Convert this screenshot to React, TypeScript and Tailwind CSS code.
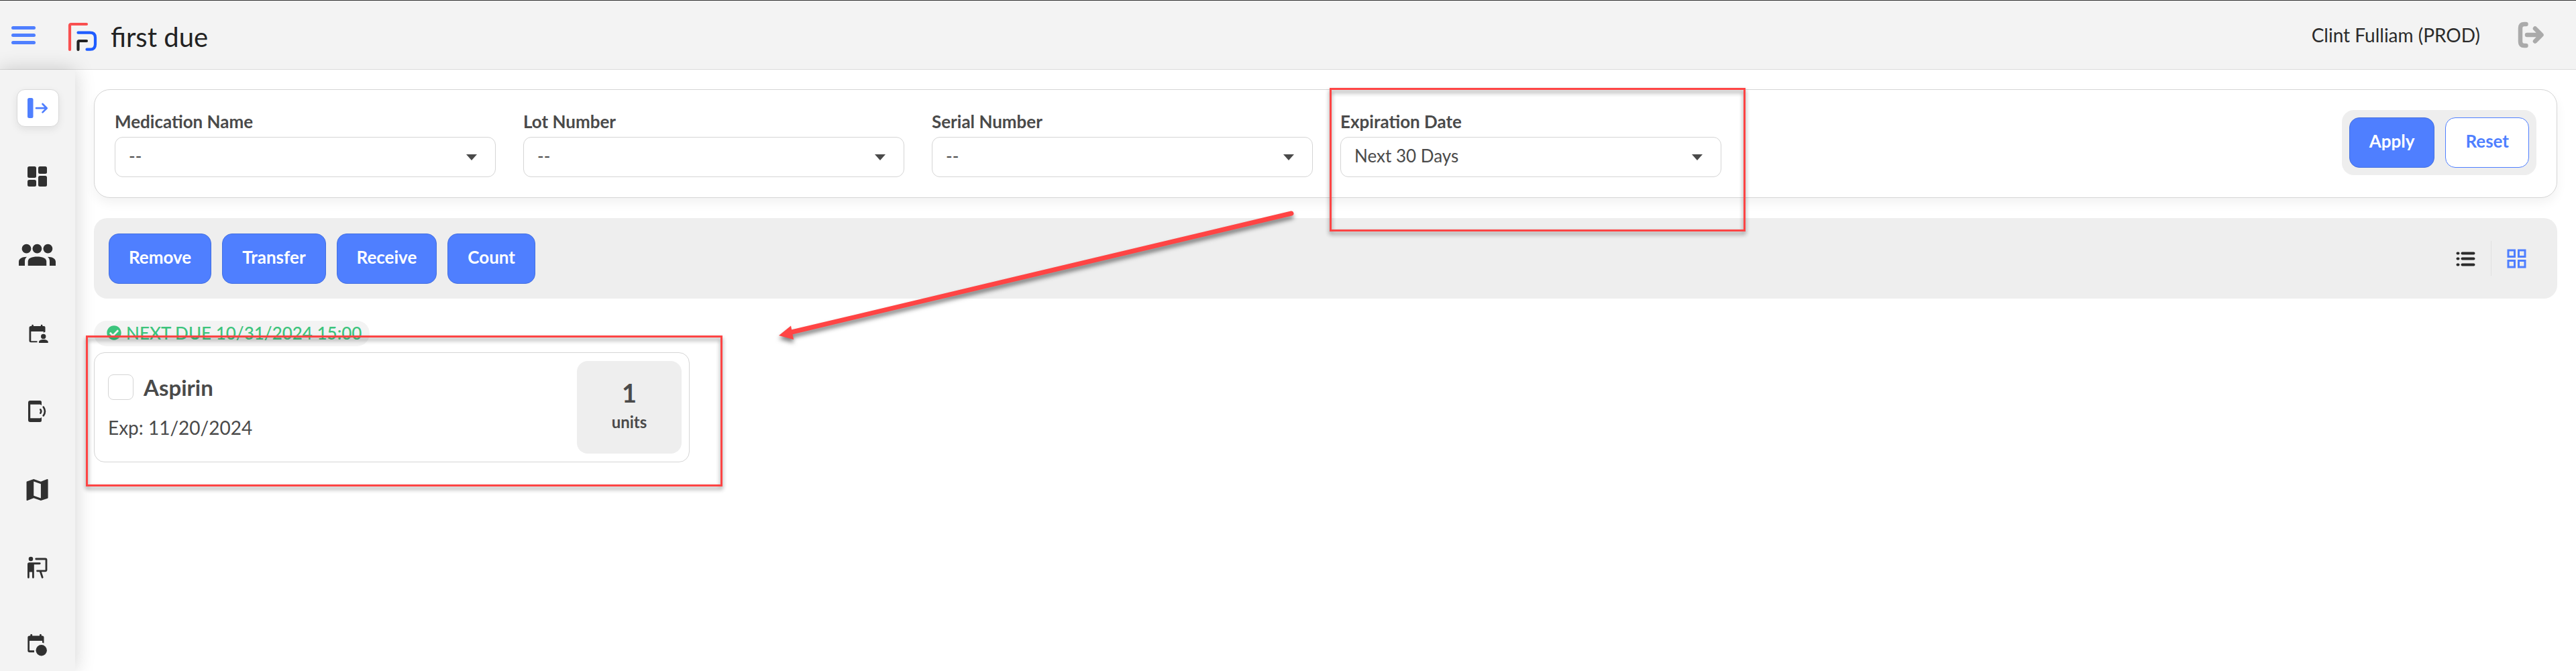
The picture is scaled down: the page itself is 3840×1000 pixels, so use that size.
import { useState, type ReactNode } from 'react';
import { FaCheckCircle } from 'react-icons/fa';

interface Filter {
  id: string;
  label: string;
  options: string[];
}

const filters: Filter[] = [
  { id: 'medication', label: 'Medication Name', options: ['--', 'Aspirin'] },
  { id: 'lot', label: 'Lot Number', options: ['--'] },
  { id: 'serial', label: 'Serial Number', options: ['--'] },
  { id: 'expiration', label: 'Expiration Date', options: ['Next 30 Days', 'Next 60 Days', 'Next 90 Days'] },
];

const actions = ['Remove', 'Transfer', 'Receive', 'Count'];

const navItems: { label: string; icon: ReactNode }[] = [
  {
    label: 'Dashboard',
    icon: (
      <>
        <rect x="13" y="6" width="13" height="17" rx="2.5" />
        <rect x="29" y="6" width="13" height="11" rx="2.5" />
        <rect x="13" y="26" width="13" height="10" rx="2.5" />
        <rect x="29" y="20" width="13" height="16" rx="2.5" />
      </>
    ),
  },
  {
    label: 'Personnel',
    icon: (
      <>
        <circle cx="11.5" cy="11.7" r="6.9" />
        <circle cx="27.4" cy="11.7" r="6.9" />
        <circle cx="43.4" cy="11.7" r="6.9" />
        <path d="M13.7 37v-6.5c0-4.500 6-7 13.700-7s13.800 2.500 13.800 7V37z" />
        <path d="M0 37v-6c0-4.500 5-7.300 12-7.300-2.200 2-3 4-3 6.800V37zM55 37v-6c0-4.500-5-7.300-12-7.300 2.200 2 3 4 3 6.800V37z" />
      </>
    ),
  },
  {
    label: 'Scheduling',
    icon: (
      <>
        <path d="M18 10h19.500a2 2 0 0 1 2 2v6.500l-2.700 1.200V18H18.300v14.300h9.200v2H18a2.500 2.500 0 0 1-2.500-2.500V12.500A2.500 2.500 0 0 1 18 10z" />
        <rect x="19.300" y="7.700" width="2.600" height="5" rx="1.300" />
        <rect x="32.800" y="7.700" width="2.600" height="5" rx="1.300" />
        <circle cx="36.700" cy="25.400" r="3.700" />
        <path d="M30 35v-1.300c0-2.500 3-3.700 6.800-3.700s6.900 1.200 6.900 3.700V35z" />
      </>
    ),
  },
  {
    label: 'Devices',
    icon: (
      <>
        <path d="M17 4h14.500A2.500 2.500 0 0 1 34 6.500V11l-2-1.200H17.200v20.400H32L34 29v4.500a2.500 2.500 0 0 1-2.500 2.500H17a3 3 0 0 1-3-3V7a3 3 0 0 1 3-3z" />
        <path d="M32.300 17.300q2 2.700 0 5.400M36.700 13.500q4.500 6.500 0 13" fill="none" stroke="currentColor" strokeWidth="2.600" strokeLinecap="round" />
      </>
    ),
  },
  {
    label: 'Map',
    icon: (
      <path
        transform="translate(6.200 -1.300) scale(1.78)"
        d="M20.500 3l-.16.03L15 5.100 9 3 3.360 4.900c-.21.07-.36.25-.36.48V20.500c0 .28.22.5.5.5l.16-.03L9 18.900l6 2.100 5.640-1.900c.21-.07.36-.25.36-.48V3.500c0-.28-.22-.5-.5-.5zM15 19l-6-2.110V5l6 2.110V19z"
      />
    ),
  },
  {
    label: 'Training',
    icon: (
      <>
        <circle cx="18" cy="6" r="3.300" />
        <path d="M15.500 11.300h15.700a1.400 1.400 0 0 1 0 2.900H22.800V33.500a1.400 1.400 0 0 1-2.800 0V25.500h-4.200v8a1.400 1.400 0 0 1-2.800 0V13.800a2.500 2.500 0 0 1 2.500-2.500z" />
        <path d="M25.700 6h14a1.300 1.300 0 0 1 1.300 1.300v15.200a1.300 1.300 0 0 1-1.300 1.300H27.500M32 24l3.200 9.500" fill="none" stroke="currentColor" strokeWidth="2.800" strokeLinecap="round" />
      </>
    ),
  },
  {
    label: 'Events',
    icon: (
      <>
        <path d="M16 3.500h19a2.500 2.500 0 0 1 2.500 2.500v8.500l-2.500-.7V11H16v14.300h7v3h-7A2.700 2.700 0 0 1 13.300 25.600V6.200A2.700 2.700 0 0 1 16 3.500z" />
        <rect x="17.300" y="1" width="2.800" height="5" rx="1.300" />
        <rect x="31" y="1" width="2.800" height="5" rx="1.300" />
        <circle cx="33.700" cy="25.300" r="8.200" />
      </>
    ),
  },
];

function Logo() {
  return (
    <a href="#" className="flex items-center gap-5 pt-1.5 text-[#222]">
      <svg className="h-11 w-11" viewBox="0 0 44 44" fill="none" strokeWidth="4.200" strokeLinecap="round">
        <path d="M3 41V5Q3 3 5 3H28" stroke="#f94f4f" />
        <path d="M15.500 15.700H33Q41 15.700 41 23V33Q41 40.700 33.500 40.700H28.500" stroke="#1f5cff" />
        <path d="M15.500 41V29.500Q15.500 28 17 28H28" stroke="#222" />
      </svg>
      <span className="text-[40px] leading-11">first due</span>
    </a>
  );
}

function Header() {
  return (
    <header className="flex h-26 items-center justify-between border-t border-b border-t-[#333] border-b-[#dcdcdc] bg-[#f3f3f3] pr-[47px] pl-[17px]">
      <div className="flex items-center gap-12">
        <button type="button" aria-label="Menu" className="flex w-9 flex-col gap-1.5">
          <span className="h-[5px] rounded-full bg-[#4f7fff]" />
          <span className="h-[5px] rounded-full bg-[#4f7fff]" />
          <span className="h-[5px] rounded-full bg-[#4f7fff]" />
        </button>
        <Logo />
      </div>
      <div className="flex items-center gap-14 text-[#2b2b2b]">
        <span className="text-[28px]">Clint Fulliam (PROD)</span>
        <button type="button" aria-label="Sign out" className="text-[#aaa]">
          <svg className="size-10" viewBox="0 0 40 40" fill="none" stroke="currentColor" strokeWidth="6.500" strokeLinecap="round" strokeLinejoin="round">
            <path d="M12.500 4H10Q4 4 4 10V30Q4 36 10 36H12.500" />
            <path d="M14 20H35M26 10.500L35.500 20L26 29.500" />
          </svg>
        </button>
      </div>
    </header>
  );
}

function Sidebar() {
  return (
    <aside className="z-10 flex w-28 shrink-0 flex-col items-center bg-[#f3f3f3] pt-[29px] shadow-[0_0_28px_rgba(0,0,0,0.18)]">
      <button
        type="button"
        aria-label="Expand menu"
        className="flex h-14 w-[63px] items-center justify-center rounded-xl border border-[#d9d9d9] bg-white shadow-[0_4px_12px_rgba(0,0,0,0.08)]"
      >
        <svg className="h-8 w-8 text-[#4f7fff]" viewBox="0 0 32 32" fill="none" stroke="currentColor" strokeLinecap="round" strokeLinejoin="round">
          <rect x="1" y="1" width="8.500" height="30" rx="2.500" fill="currentColor" stroke="none" />
          <path d="M14 16.200h15M23.500 10l6.200 6.200-6.200 6.200" strokeWidth="2.700" />
        </svg>
      </button>
      <nav className="mt-[53px] flex flex-col gap-[77px]">
        {navItems.map((item) => (
          <a key={item.label} href="#" aria-label={item.label} className="text-[#303030]">
            <svg className="h-10 w-14" viewBox="0 0 56 40" fill="currentColor">
              {item.icon}
            </svg>
          </a>
        ))}
      </nav>
    </aside>
  );
}

function FilterSelect({ filter }: { filter: Filter }) {
  const [value, setValue] = useState(filter.options[0]);

  return (
    <div className="max-w-[568px] flex-1">
      <label htmlFor={filter.id} className="mb-1.5 block text-[26px] leading-[34px] font-bold">
        {filter.label}
      </label>
      <div className="grid items-center">
        <select
          id={filter.id}
          value={value}
          onChange={(e) => setValue(e.target.value)}
          className="col-start-1 row-start-1 h-15 w-full appearance-none rounded-xl border border-[#d5d5d5] bg-white px-5 pb-1 text-[26px]"
        >
          {filter.options.map((option) => (
            <option key={option}>{option}</option>
          ))}
        </select>
        <svg className="pointer-events-none col-start-1 row-start-1 mr-7 h-[9px] w-4 justify-self-end" viewBox="0 0 16 9" fill="currentColor">
          <path d="M0 0h16L8 9z" />
        </svg>
      </div>
    </div>
  );
}

function FilterBar() {
  return (
    <form className="flex items-start justify-between rounded-3xl border border-[#d5d5d5] bg-white p-[30px] shadow-[0_8px_16px_rgba(0,0,0,0.05)]">
      <div className="flex flex-1 gap-[41px]">
        {filters.map((filter) => (
          <FilterSelect key={filter.id} filter={filter} />
        ))}
      </div>
      <div className="flex gap-4 rounded-[18px] bg-[#eee] p-[11px]">
        <button type="button" className="h-[75px] rounded-[15px] border border-[#4470e0] bg-[#4f7fff] px-[29px] pb-1 text-[26px] font-bold text-white">
          Apply
        </button>
        <button type="reset" className="h-[75px] rounded-[15px] border border-[#4f7fff] bg-white px-[29px] pb-1 text-[26px] font-bold text-[#4f7fff]">
          Reset
        </button>
      </div>
    </form>
  );
}

function Toolbar() {
  return (
    <div className="mt-[30px] flex h-30 items-center justify-between rounded-[20px] bg-[#eee] pr-[46px] pl-[22px]">
      <div className="flex gap-4">
        {actions.map((action) => (
          <button
            key={action}
            type="button"
            className="h-[75px] rounded-[15px] border border-[#4470e0] bg-[#4f7fff] px-[29px] pb-1 text-[26px] font-bold text-white"
          >
            {action}
          </button>
        ))}
      </div>
      <div className="flex items-center gap-[23px]">
        <button type="button" aria-label="List view" className="text-[#2b2b2b]">
          <svg className="size-[29px]" viewBox="0 0 29 29" fill="none" stroke="currentColor" strokeWidth="4" strokeLinecap="round">
            <path d="M2.500 6.500h1M2.500 14.500h1M2.500 23.500h1M9.500 6.500h17M9.500 14.500h17M9.500 23.500h17" />
          </svg>
        </button>
        <div className="h-13 w-px bg-[#e0e0e0]" />
        <button type="button" aria-label="Grid view" className="text-[#4f7fff]">
          <svg className="size-[29px]" viewBox="0 0 29 29" fill="none" stroke="currentColor" strokeWidth="3">
            <path d="M2 2h9.500v9.500H2zM17.500 2H27v9.500h-9.500zM2 17.500h9.500V27H2zM17.500 17.500H27V27h-9.500z" />
          </svg>
        </button>
      </div>
    </div>
  );
}

function MedicationCard() {
  return (
    <section className="mt-[33px] flex w-[888px] max-w-full flex-col">
      <div className="flex h-[38px] items-center gap-[7px] self-start rounded-full bg-[#f3f3f3] pr-3 pb-0.5 pl-[19px] text-[26px] font-medium text-[#3cc47c]">
        <FaCheckCircle className="size-[22px]" />
        NEXT DUE 10/31/2024 15:00
      </div>
      <div className="mt-[9px] flex items-stretch justify-between rounded-2xl border border-[#d5d5d5] bg-white py-3 pr-[11px] pl-5">
        <div className="flex flex-col gap-[21px] pt-5">
          <div className="flex items-center gap-[15px]">
            <input
              id="aspirin"
              type="checkbox"
              className="size-[38px] appearance-none rounded-lg border border-[#d5d5d5] bg-white checked:bg-[#4f7fff]"
            />
            <label htmlFor="aspirin" className="text-[33px] leading-[38px] font-bold">
              Aspirin
            </label>
          </div>
          <p className="text-[28px] leading-10">Exp: 11/20/2024</p>
        </div>
        <div className="flex h-[138px] w-[156px] flex-col items-center justify-center rounded-2xl bg-[#eee] pb-1 font-bold">
          <span className="text-[38px] leading-12">1</span>
          <span className="text-2xl leading-10">units</span>
        </div>
      </div>
    </section>
  );
}

// Red markup drawn over the page: two callout boxes and the arrow between them
function Annotations() {
  return (
    <div className="pointer-events-none absolute inset-0 z-20 overflow-hidden" aria-hidden="true">
      <div className="absolute top-[131px] left-[1982px] h-[214px] w-[620px] border-3 border-[#ff4444] [filter:drop-shadow(0_4px_3px_rgba(0,0,0,0.45))]" />
      <div className="absolute top-[500px] left-[128px] h-[225px] w-[949px] border-3 border-[#ff4444] [filter:drop-shadow(0_4px_3px_rgba(0,0,0,0.45))]" />
      <svg
        className="absolute top-[290px] left-[1140px] h-[240px] w-[820px] [filter:drop-shadow(0_5px_3px_rgba(0,0,0,0.5))]"
        viewBox="0 0 820 240"
        fill="#ff4444"
      >
        <path d="M40 205L785 28" stroke="#ff4444" strokeWidth="7" strokeLinecap="round" />
        <path d="M21 210L39 195.500L43 216z" />
      </svg>
    </div>
  );
}

export default function App() {
  return (
    <div className="relative flex min-h-screen flex-col bg-white font-['Lato',sans-serif] text-[#4a4a4a]">
      <Header />
      <div className="flex flex-1">
        <Sidebar />
        <main className="min-w-0 flex-1 px-7 pt-[29px]">
          <FilterBar />
          <Toolbar />
          <MedicationCard />
        </main>
      </div>
      <Annotations />
    </div>
  );
}
